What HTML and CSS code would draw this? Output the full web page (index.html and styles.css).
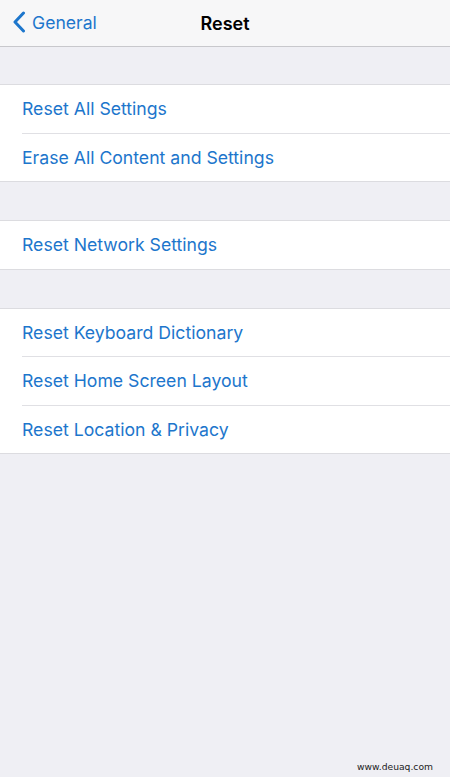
FILE: index.html
```html
<!DOCTYPE html>
<html lang="en">
  <head>
    <meta charset="UTF-8" />
    <meta name="viewport" content="width=device-width, initial-scale=1.0" />
    <title>Reset</title>
    <link rel="stylesheet" href="styles.css">
  </head>
  <body>
    <!-- top nav -->
    <div class="navbar">
      <a class="back" href="#">
        <svg class="chevron" width="14" height="22" viewBox="0 0 14 22">
          <path d="M11.5 2 L3 11 L11.5 20" fill="none" stroke="currentColor" stroke-width="3" stroke-linecap="round" stroke-linejoin="round" />
        </svg>
        <span>General</span>
      </a>
      <div class="title">Reset</div>
    </div>

    <!-- groups -->
    <ul class="group">
      <li>Reset All Settings</li>
      <li>Erase All Content and Settings</li>
    </ul>
    <ul class="group">
      <li>Reset Network Settings</li>
    </ul>
    <ul class="group">
      <li>Reset Keyboard Dictionary</li>
      <li>Reset Home Screen Layout</li>
      <li>Reset Location &amp; Privacy</li>
    </ul>

    <div class="watermark">www.deuaq.com</div>
  </body>
</html>
```

FILE: styles.css
```css
body {
  margin: 0;
  height: 777px;
  position: relative;
  background-color: #efeff4;
  font-family: Inter, "Liberation Sans", sans-serif;
  overflow: hidden;
}

/* nav bar */
.navbar {
  height: 46px;
  background-color: #f7f7f8;
  border-bottom: 1px solid #c8c8cc;
  display: flex;
  align-items: center;
  justify-content: center;
  position: relative;
}
.back {
  position: absolute;
  left: 12px;
  top: 11px;
  display: flex;
  align-items: center;
  gap: 6px;
  color: #1d76cc;
  text-decoration: none;
  font-size: 17.6px;
}
.title {
  font-size: 18px;
  font-weight: 600;
  color: #000;
}

/* setting groups */
.group {
  list-style: none;
  margin: 37px 0 0;
  padding: 0;
  background-color: #fff;
  border-top: 1px solid #dcdce0;
  border-bottom: 1px solid #dcdce0;
}
.group + .group {
  margin-top: 38px;
}
.group li {
  height: 47.5px;
  margin-left: 22px;
  display: flex;
  align-items: center;
  color: #1d76cc;
  font-size: 17.65px;
}
.group li + li {
  border-top: 1px solid #e0e0e4;
}

.watermark {
  position: absolute;
  right: 17px;
  bottom: 5px;
  font-family: "DejaVu Sans", sans-serif;
  font-size: 9.2px;
  color: #222;
}
```
